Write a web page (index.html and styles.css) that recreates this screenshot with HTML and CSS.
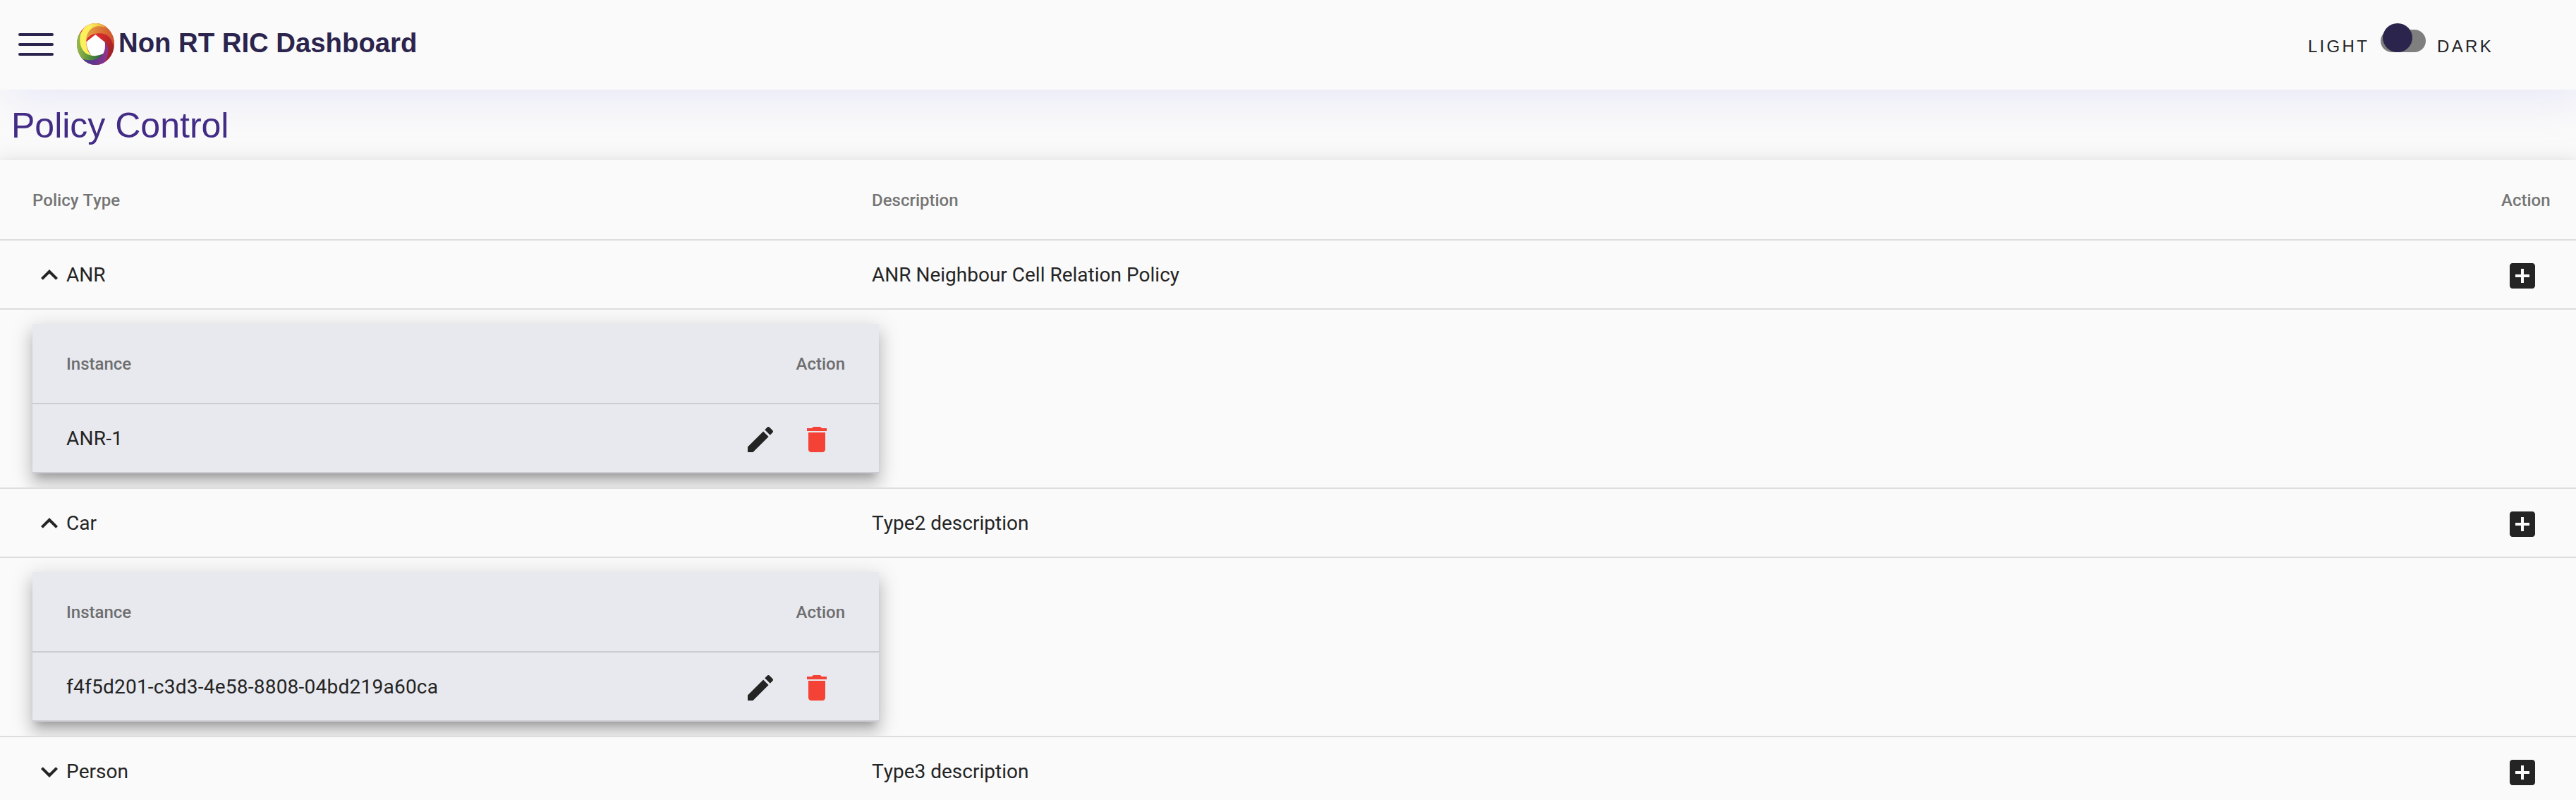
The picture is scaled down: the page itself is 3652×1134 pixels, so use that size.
FILE: index.html
```html
<!DOCTYPE html>
<html lang="en">
<head>
<meta charset="utf-8">
<title>Non RT RIC Dashboard</title>
<link rel="stylesheet" href="styles.css">
</head>
<body>
<svg width="0" height="0" class="sprite" aria-hidden="true">
  <symbol id="less" viewBox="0 0 24 24"><path d="M12 8l-6 6 1.41 1.41L12 10.83l4.59 4.58L18 14z"/></symbol>
  <symbol id="more" viewBox="0 0 24 24"><path d="M16.59 8.59L12 13.17 7.41 8.59 6 10l6 6 6-6z"/></symbol>
  <symbol id="add" viewBox="0 0 24 24"><path d="M19 3H5c-1.11 0-2 .9-2 2v14c0 1.1.89 2 2 2h14c1.1 0 2-.9 2-2V5c0-1.1-.9-2-2-2zm-2 10h-4v4h-2v-4H7v-2h4V7h2v4h4v2z"/></symbol>
  <symbol id="edit" viewBox="0 0 24 24"><path d="M3 17.25V21h3.75L17.81 9.94l-3.75-3.75L3 17.25zM20.71 7.04c.39-.39.39-1.02 0-1.41l-2.34-2.34c-.39-.39-1.02-.39-1.41 0l-1.83 1.83 3.75 3.75 1.83-1.83z"/></symbol>
  <symbol id="delete" viewBox="0 0 24 24"><path d="M6 19c0 1.1.9 2 2 2h8c1.1 0 2-.9 2-2V7H6v12zM19 4h-3.5l-1-1h-5l-1 1H5v2h14V4z"/></symbol>
</svg>
<header class="topbar">
  <div class="menu"><span></span><span></span><span></span></div>
  <svg class="logo" viewBox="0 0 159 177" preserveAspectRatio="none">
    <defs>
      <clipPath id="disc"><ellipse cx="79.500" cy="88.500" rx="79.500" ry="88.500"/></clipPath>
      <linearGradient id="red" x1="0" y1="0" x2="1" y2="1"><stop offset=".45" stop-color="#d92a2a"/><stop offset=".8" stop-color="#a02228"/></linearGradient>
      <linearGradient id="orange"><stop offset="0" stop-color="#e8a445"/><stop offset="1" stop-color="#cf4c2b"/></linearGradient>
      <linearGradient id="yellow"><stop offset=".35" stop-color="#fcf05c"/><stop offset="1" stop-color="#e39a35"/></linearGradient>
      <linearGradient id="green"><stop offset="0" stop-color="#a3c14c"/><stop offset=".45" stop-color="#5f9640"/><stop offset="1" stop-color="#1c5a3c"/></linearGradient>
      <linearGradient id="purple"><stop offset="0" stop-color="#2c3f92"/><stop offset=".5" stop-color="#5f3590"/><stop offset="1" stop-color="#93348c"/></linearGradient>
    </defs>
    <g clip-path="url(#disc)">
      <rect width="159" height="177" fill="url(#red)"/>
      <path d="M36 84C42 52 72 40 105 43C132 46 150 66 156 100L165 60L110-6L50 8Z" fill="url(#orange)"/>
      <path d="M118 76C142 104 136 150 108 180L60 185L0 140L60 130Z" fill="url(#purple)"/>
      <path d="M0 40L22 40L45 115C60 136 90 142 113 128C94 154 58 168 12 146L-8 110Z" fill="url(#green)"/>
      <path d="M134 24C84-4 36 22 40 80C40 104 48 124 62 137C26 132 8 96 14 54C22 18 50-4 90-4Z" fill="url(#yellow)"/>
      <path d="M79 48L119 80Q123 108 112 129Q88 142 62 137Q40 110 40 79Z" fill="#fff"/>
    </g>
  </svg>
  <h1 class="brand">Non RT RIC Dashboard</h1>
  <div class="theme">
    <span>LIGHT</span>
    <div class="switch"><i class="knob"></i></div>
    <span>DARK</span>
  </div>
</header>
<div class="title">Policy Control</div>
<main class="table">
  <div class="row head"><div class="type">Policy Type</div><div class="desc">Description</div><div class="act">Action</div></div>
  <div class="row"><div class="type"><svg class="icon"><use href="#less"/></svg>ANR</div><div class="desc">ANR Neighbour Cell Relation Policy</div><div class="act"><svg class="icon"><use href="#add"/></svg></div></div>
  <div class="detail">
    <div class="card">
      <div class="crow head"><span>Instance</span><span>Action</span></div>
      <div class="crow"><span class="id">ANR-1</span><div class="tools"><svg class="icon"><use href="#edit"/></svg><svg class="icon warn"><use href="#delete"/></svg></div></div>
    </div>
  </div>
  <div class="row"><div class="type"><svg class="icon"><use href="#less"/></svg>Car</div><div class="desc">Type2 description</div><div class="act"><svg class="icon"><use href="#add"/></svg></div></div>
  <div class="detail">
    <div class="card">
      <div class="crow head"><span>Instance</span><span>Action</span></div>
      <div class="crow"><span class="id">f4f5d201-c3d3-4e58-8808-04bd219a60ca</span><div class="tools"><svg class="icon"><use href="#edit"/></svg><svg class="icon warn"><use href="#delete"/></svg></div></div>
    </div>
  </div>
  <div class="row"><div class="type"><svg class="icon"><use href="#more"/></svg>Person</div><div class="desc">Type3 description</div><div class="act"><svg class="icon"><use href="#add"/></svg></div></div>
</main>
</body>
</html>
```
FILE: styles.css
```css
* { box-sizing: border-box; }
html, body { height: 100%; }
body {
  margin: 0;
  overflow: hidden;
  background: #fafafa;
  color: #242424;
  font-family: Roboto, sans-serif;
  font-size: 28px;
  font-kerning: none;
}
.sprite { display: block; }
.topbar {
  height: 127px;
  display: flex;
  align-items: flex-start;
  padding: 33px 117px 0 26px;
  background: #fafafa;
  box-shadow: 12px 10px 60px rgba(200, 200, 245, .4);
  font-family: "Liberation Sans", Arial, sans-serif;
}
.menu {
  width: 50px;
  margin: 14px 33px 0 0;
  display: flex;
  flex-direction: column;
  gap: 10px;
}
.menu span { height: 4px; border-radius: 2px; background: #2b244d; }
.logo { width: 53px; height: 59px; }
.brand {
  margin: 5px 0 0 6px;
  font-size: 38.3px;
  line-height: 46px;
  font-weight: 700;
  color: #2b244d;
}
.theme {
  margin-left: auto;
  display: flex;
  font-size: 24px;
  line-height: 28px;
  letter-spacing: 3.3px;
}
.theme span { margin-top: 19px; }
.switch {
  width: 64px;
  height: 32px;
  margin: 9px 16px 0 16px;
  border-radius: 16px;
  background: #7f7f7f;
}
.knob {
  display: block;
  width: 42px;
  height: 41px;
  border-radius: 50%;
  background: #2b244d;
  transform: translate(3px, -9px);
}
.title {
  height: 100px;
  padding: 21px 16px 0;
  font-family: "Liberation Sans", Arial, sans-serif;
  font-size: 50px;
  line-height: 60px;
  color: #432c85;
}
.table {
  background: #fafafa;
  box-shadow: 0 10px 10px -6px rgba(0,0,0,.2), 0 16px 20px 2px rgba(0,0,0,.14), 0 6px 28px 4px rgba(0,0,0,.12);
}
.row {
  display: flex;
  align-items: center;
  height: 98px;
  padding: 0 34px 0 46px;
  border-bottom: 2px solid #dcdddc;
}
.row.head, .crow.head {
  height: 114px;
  padding-top: 2px;
  font-size: 24px;
  font-weight: 500;
  color: #757575;
}
.type { width: 1190px; display: flex; align-items: center; }
.desc { flex: 1; }
.act { width: 72px; }
.act .icon { margin-left: 6px; }
.icon {
  display: block;
  flex: none;
  width: 48px;
  height: 48px;
  margin-top: 3px;
  fill: #242424;
}
.type .icon { margin-top: 1px; }
.detail {
  height: 254px;
  padding: 20px 46px;
  overflow: hidden;
  border-bottom: 2px solid #dcdddc;
}
.card {
  width: 1200px;
  background: #e8e9ee;
  box-shadow: 0 10px 10px -6px rgba(0,0,0,.2), 0 16px 20px 2px rgba(0,0,0,.14), 0 6px 28px 4px rgba(0,0,0,.12);
}
.crow {
  display: flex;
  align-items: center;
  justify-content: space-between;
  height: 98px;
  padding: 0 48px;
  border-bottom: 2px solid #cbccd2;
}
.crow.head { color: #6e6e70; }
.id { letter-spacing: .24px; }
.tools { display: flex; gap: 32px; margin-right: 16px; }
.icon.warn { fill: #f44336; }
```
